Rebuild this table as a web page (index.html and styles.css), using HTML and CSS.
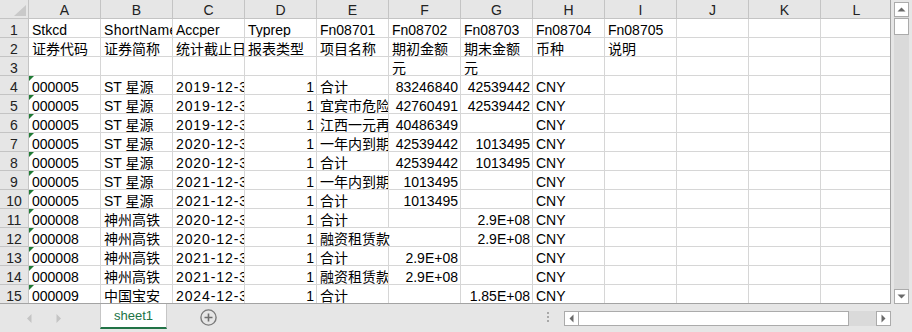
FILE: index.html
```html
<!DOCTYPE html>
<html lang="zh">
<head>
<meta charset="utf-8">
<title>sheet1</title>
<link rel="stylesheet" href="styles.css">
</head>
<body>
<div class="app">
  <div class="main">
    <div class="sheet">
      <div class="grid">
        <div class="corner"><span class="corner-tri"></span></div>
        <div class="ch">A</div><div class="ch">B</div><div class="ch">C</div><div class="ch">D</div><div class="ch">E</div><div class="ch">F</div><div class="ch">G</div><div class="ch">H</div><div class="ch">I</div><div class="ch">J</div><div class="ch">K</div><div class="ch">L</div>

        <div class="rh">1</div><div class="c">Stkcd</div><div class="c w">ShortName</div><div class="c">Accper</div><div class="c">Typrep</div><div class="c">Fn08701</div><div class="c">Fn08702</div><div class="c">Fn08703</div><div class="c">Fn08704</div><div class="c">Fn08705</div><div class="c"></div><div class="c"></div><div class="c"></div>

        <div class="rh">2</div><div class="c">证券代码</div><div class="c">证券简称</div><div class="c">统计截止日期</div><div class="c">报表类型</div><div class="c">项目名称</div><div class="c">期初金额</div><div class="c">期末金额</div><div class="c">币种</div><div class="c">说明</div><div class="c"></div><div class="c"></div><div class="c"></div>

        <div class="rh">3</div><div class="c"></div><div class="c"></div><div class="c"></div><div class="c"></div><div class="c"></div><div class="c">元</div><div class="c">元</div><div class="c"></div><div class="c"></div><div class="c"></div><div class="c"></div><div class="c"></div>

        <div class="rh">4</div><div class="c t">000005</div><div class="c">ST 星源</div><div class="c d">2019-12-31</div><div class="c n">1</div><div class="c">合计</div><div class="c n">83246840</div><div class="c n">42539442</div><div class="c">CNY</div><div class="c"></div><div class="c"></div><div class="c"></div><div class="c"></div>

        <div class="rh">5</div><div class="c t">000005</div><div class="c">ST 星源</div><div class="c d">2019-12-31</div><div class="c n">1</div><div class="c">宜宾市危险废物处置有限公司</div><div class="c n">42760491</div><div class="c n">42539442</div><div class="c">CNY</div><div class="c"></div><div class="c"></div><div class="c"></div><div class="c"></div>

        <div class="rh">6</div><div class="c t">000005</div><div class="c">ST 星源</div><div class="c d">2019-12-31</div><div class="c n">1</div><div class="c">江西一元再生资源有限公司</div><div class="c n">40486349</div><div class="c n"></div><div class="c">CNY</div><div class="c"></div><div class="c"></div><div class="c"></div><div class="c"></div>

        <div class="rh">7</div><div class="c t">000005</div><div class="c">ST 星源</div><div class="c d">2020-12-31</div><div class="c n">1</div><div class="c">一年内到期的长期应付款</div><div class="c n">42539442</div><div class="c n">1013495</div><div class="c">CNY</div><div class="c"></div><div class="c"></div><div class="c"></div><div class="c"></div>

        <div class="rh">8</div><div class="c t">000005</div><div class="c">ST 星源</div><div class="c d">2020-12-31</div><div class="c n">1</div><div class="c">合计</div><div class="c n">42539442</div><div class="c n">1013495</div><div class="c">CNY</div><div class="c"></div><div class="c"></div><div class="c"></div><div class="c"></div>

        <div class="rh">9</div><div class="c t">000005</div><div class="c">ST 星源</div><div class="c d">2021-12-31</div><div class="c n">1</div><div class="c">一年内到期的长期应付款</div><div class="c n">1013495</div><div class="c n"></div><div class="c">CNY</div><div class="c"></div><div class="c"></div><div class="c"></div><div class="c"></div>

        <div class="rh">10</div><div class="c t">000005</div><div class="c">ST 星源</div><div class="c d">2021-12-31</div><div class="c n">1</div><div class="c">合计</div><div class="c n">1013495</div><div class="c n"></div><div class="c">CNY</div><div class="c"></div><div class="c"></div><div class="c"></div><div class="c"></div>

        <div class="rh">11</div><div class="c t">000008</div><div class="c">神州高铁</div><div class="c d">2020-12-31</div><div class="c n">1</div><div class="c">合计</div><div class="c n"></div><div class="c n">2.9E+08</div><div class="c">CNY</div><div class="c"></div><div class="c"></div><div class="c"></div><div class="c"></div>

        <div class="rh">12</div><div class="c t">000008</div><div class="c">神州高铁</div><div class="c d">2020-12-31</div><div class="c n">1</div><div class="c span2">融资租赁款</div><div class="c n">2.9E+08</div><div class="c">CNY</div><div class="c"></div><div class="c"></div><div class="c"></div><div class="c"></div>

        <div class="rh">13</div><div class="c t">000008</div><div class="c">神州高铁</div><div class="c d">2021-12-31</div><div class="c n">1</div><div class="c">合计</div><div class="c n">2.9E+08</div><div class="c n"></div><div class="c">CNY</div><div class="c"></div><div class="c"></div><div class="c"></div><div class="c"></div>

        <div class="rh">14</div><div class="c t">000008</div><div class="c">神州高铁</div><div class="c d">2021-12-31</div><div class="c n">1</div><div class="c">融资租赁款</div><div class="c n">2.9E+08</div><div class="c n"></div><div class="c">CNY</div><div class="c"></div><div class="c"></div><div class="c"></div><div class="c"></div>

        <div class="rh">15</div><div class="c t">000009</div><div class="c">中国宝安</div><div class="c d">2024-12-31</div><div class="c n">1</div><div class="c">合计</div><div class="c n"></div><div class="c n">1.85E+08</div><div class="c">CNY</div><div class="c"></div><div class="c"></div><div class="c"></div><div class="c"></div>
      </div>
    </div>
    <div class="vgutter">
      <div class="vscroll">
        <div class="sbtn"><svg width="9" height="5" viewBox="0 0 9 5"><path d="M0.5 4.5 L4.5 0.5 L8.5 4.5 Z" fill="#6a6a6a"/></svg></div>
        <div class="vthumb"></div>
        <div class="vtrack"></div>
        <div class="sbtn"><svg width="9" height="5" viewBox="0 0 9 5"><path d="M0.5 0.5 L4.5 4.5 L8.5 0.5 Z" fill="#6a6a6a"/></svg></div>
      </div>
    </div>
  </div>
  <div class="bottom">
    <div class="nav">
      <svg class="navarrow" width="5" height="9" viewBox="0 0 5 9"><path d="M4.5 0 L0 4.5 L4.5 9 Z" fill="#c4c4c4"/></svg>
      <svg class="navarrow" width="5" height="9" viewBox="0 0 5 9"><path d="M0.5 0 L5 4.5 L0.5 9 Z" fill="#c4c4c4"/></svg>
    </div>
    <div class="tab">sheet1</div>
    <svg class="plus" width="17" height="17" viewBox="0 0 17 17"><circle cx="8.5" cy="8.5" r="7.6" fill="none" stroke="#7a7a7a" stroke-width="1.4"/><path d="M8.5 4.5 V12.5 M4.5 8.5 H12.5" stroke="#6e6e6e" stroke-width="1.6"/></svg>
    <div class="splitter"><span></span><span></span><span></span></div>
    <div class="hscroll">
      <div class="sbtn h"><svg width="5" height="9" viewBox="0 0 5 9"><path d="M4.5 0.5 L0.5 4.5 L4.5 8.5 Z" fill="#6a6a6a"/></svg></div>
      <div class="hthumb"></div>
      <div class="htrack"></div>
      <div class="sbtn h"><svg width="5" height="9" viewBox="0 0 5 9"><path d="M0.5 0.5 L4.5 4.5 L0.5 8.5 Z" fill="#6a6a6a"/></svg></div>
    </div>
  </div>
</div>
</body>
</html>
```

FILE: styles.css
```css
* { box-sizing: border-box; }
html, body { margin: 0; padding: 0; }
body {
  width: 912px;
  height: 332px;
  overflow: hidden;
  background: #e6e6e6;
  font-family: "Liberation Sans", "Noto Sans CJK SC", sans-serif;
  font-size: 14px;
  color: #000;
}
.app { display: flex; flex-direction: column; width: 912px; height: 332px; }
.main { display: flex; height: 304px; }
.sheet {
  width: 891px;
  height: 304px;
  overflow: hidden;
  background: #fff;
  border-right: 1px solid #a3a3a3;
  border-bottom: 1px solid #a3a3a3;
}
.grid {
  display: grid;
  grid-template-columns: 29px repeat(12, 72px);
  grid-auto-rows: 19px;
  width: 893px;
}
.corner, .ch, .rh {
  background: #e6e6e6;
  border-right: 1px solid #c4c4c4;
  border-bottom: 1px solid #c4c4c4;
  color: #222;
}
.corner { display: flex; justify-content: flex-end; align-items: flex-end; padding: 0 2px 2px 0; }
.corner-tri {
  width: 0; height: 0;
  border-left: 12px solid transparent;
  border-bottom: 11px solid #c9c9c9;
}
.ch { text-align: center; line-height: 18px; padding-top: 1px; }
.rh { text-align: center; line-height: 16px; padding-top: 3px; }
.c {
  position: relative;
  border-right: 1px solid #d6d6d6;
  border-bottom: 1px solid #d6d6d6;
  padding: 3px 2px 0 3px;
  line-height: 16px;
  white-space: nowrap;
  overflow: hidden;
}
.c.w { letter-spacing: 0.3px; }
.c.d { letter-spacing: 0.9px; }
.c.n { text-align: right; padding-right: 2px; }
.c.span2 { grid-column: span 2; }
.c.t::before {
  content: "";
  position: absolute;
  top: 0; left: 0;
  border-top: 5px solid #1f7a34;
  border-right: 5px solid transparent;
}
.vgutter { width: 21px; padding: 2px 0 0 3px; }
.vscroll {
  width: 15px;
  height: 302px;
  display: flex;
  flex-direction: column;
  background: #dadada;
}
.sbtn {
  width: 15px;
  height: 15px;
  background: #fff;
  border: 1px solid #ababab;
  display: flex;
  align-items: center;
  justify-content: center;
  flex: none;
}
.vthumb { height: 17px; margin-top: 1px; background: #fff; border: 1px solid #ababab; flex: none; }
.vtrack { flex: 1; }
.bottom { display: flex; align-items: flex-start; height: 28px; background: #e6e6e6; }
.nav { width: 100px; height: 28px; display: flex; align-items: center; padding-left: 27px; gap: 24px; }
.tab {
  width: 67px;
  height: 25px;
  background: #fff;
  border-left: 1px solid #c6c6c6;
  border-right: 1px solid #c6c6c6;
  border-bottom: 2px solid #217346;
  color: #217346;
  font-size: 13px;
  text-align: center;
  line-height: 22px;
  padding-top: 1px;
}
.plus { margin: 5px 0 0 33px; flex: none; }
.splitter { margin: 8px 0 0 330px; display: flex; flex-direction: column; gap: 2px; width: 2px; }
.splitter span { width: 2px; height: 2px; background: #a8a8a8; }
.hscroll { margin: 7px 0 0 15px; width: 327px; height: 15px; display: flex; background: #dadada; }
.hthumb { width: 270px; background: #fff; border: 1px solid #ababab; border-left: none; }
.htrack { flex: 1; }
```
